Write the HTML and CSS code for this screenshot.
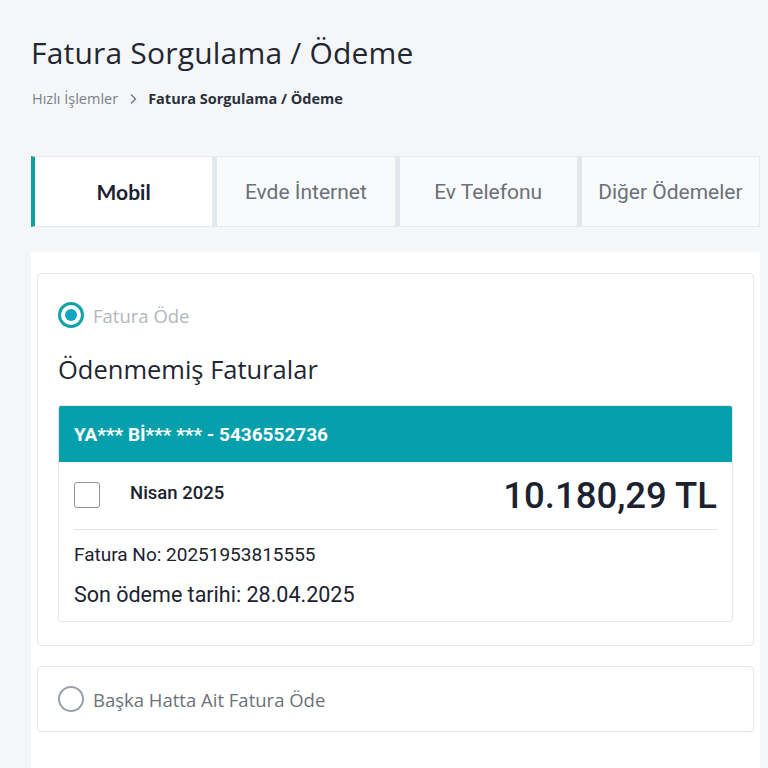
FILE: index.html
```html
<!DOCTYPE html>
<html lang="tr">
<head>
  <meta charset="UTF-8" />
  <meta name="viewport" content="width=device-width, initial-scale=1.0"/>
  <title>Fatura Sorgulama / Ödeme</title>
  <link rel="stylesheet" href="styles.css">
</head>
<body>
  <div class="page">
    <h1 class="title">Fatura Sorgulama / Ödeme</h1>
    <div class="crumbs">
      <span class="crumb-link">Hızlı İşlemler</span>
      <svg class="crumb-sep" width="10" height="12" viewBox="0 0 10 12"><path d="M3 1.5 L7.5 6 L3 10.5" fill="none" stroke="#6b7280" stroke-width="1.3"/></svg>
      <span class="crumb-current">Fatura Sorgulama / Ödeme</span>
    </div>

    <div class="tabs">
      <div class="tab active">Mobil</div>
      <div class="tab">Evde İnternet</div>
      <div class="tab">Ev Telefonu</div>
      <div class="tab">Diğer Ödemeler</div>
    </div>

    <div class="panel">
      <div class="box">
        <label class="option">
          <span class="radio checked"></span>
          <span class="option-label">Fatura Öde</span>
        </label>
        <h2 class="section-title">Ödenmemiş Faturalar</h2>
        <div class="bill">
          <div class="bill-head">YA*** Bİ*** *** - 5436552736</div>
          <div class="bill-body">
            <div class="bill-row">
              <span class="check"></span>
              <span class="bill-month">Nisan 2025</span>
              <span class="bill-amount">10.180,29 TL</span>
            </div>
            <div class="bill-no">Fatura No: 20251953815555</div>
            <div class="bill-due">Son ödeme tarihi: 28.04.2025</div>
          </div>
        </div>
      </div>
      <div class="box box-small">
        <label class="option">
          <span class="radio"></span>
          <span class="option-label other">Başka Hatta Ait Fatura Öde</span>
        </label>
      </div>
    </div>
  </div>
</body>
</html>
```

FILE: styles.css
```css
* { margin: 0; padding: 0; box-sizing: border-box; }
body {
  background: #f5f6f8;
  font-family: 'Open Sans', 'Lato', sans-serif;
  color: #1f2733;
  overflow: hidden;
}
.page {
  padding: 34px 8px 0 31px;
}
.title {
  font-weight: 400;
  font-size: 30px;
  line-height: 38px;
  letter-spacing: 0.2px;
  color: #1f2733;
}
.crumbs {
  display: flex;
  align-items: center;
  gap: 8px;
  margin-top: 18px;
  margin-left: 1px;
  font-size: 14.5px;
  line-height: 18px;
}
.crumb-link { color: #7b8088; }
.crumb-current { font-weight: 700; color: #2a303a; }
.crumb-sep { margin: 0 2px; }

.tabs {
  display: flex;
  margin-top: 48px;
  height: 71px;
}
.tab {
  flex: 1;
  display: flex;
  align-items: center;
  justify-content: center;
  background: #f9fafb;
  border: 1px solid #e6e9ed;
  border-left: 4px solid #e3e6ea;
  font-family: 'Roboto', sans-serif;
  font-size: 21px;
  color: #6b7079;
}
.tab.active {
  background: #fff;
  border-left-color: #0f9ea4;
  color: #1b2230;
  font-weight: 700;
  font-family: 'Lato', sans-serif;
}

.panel {
  margin-top: 25px;
  background: #fff;
  padding: 21px 6px 40px 6px;
  min-height: 520px;
}
.box {
  border: 1px solid #e4e6ea;
  border-radius: 4px;
  padding: 28px 20px 23px 20px;
}
.box-small {
  margin-top: 20px;
  padding: 19px 20px 19px 20px;
}
.option {
  display: flex;
  align-items: center;
  gap: 9px;
}
.radio {
  width: 26px;
  height: 26px;
  border-radius: 50%;
  border: 2px solid #9aa1ad;
  display: flex;
  align-items: center;
  justify-content: center;
}
.radio.checked {
  border: 3px solid #12a2a8;
}
.radio.checked::after {
  content: "";
  width: 12px;
  height: 12px;
  border-radius: 50%;
  background: #12a6c4;
}
.option-label {
  font-size: 18.5px;
  color: #b3b7bd;
}
.option-label.other {
  color: #6d727a;
}
.section-title {
  font-weight: 400;
  font-size: 25.5px;
  line-height: 32px;
  margin-top: 25px;
  color: #1f2733;
}
.bill {
  margin-top: 20px;
  border: 1px solid #e4e6ea;
  border-radius: 3px;
  overflow: hidden;
}
.bill-head {
  background: #069fac;
  color: #fff;
  font-family: 'Roboto', sans-serif;
  font-weight: 700;
  font-size: 19px;
  height: 56px;
  display: flex;
  align-items: center;
  padding-left: 15px;
}
.bill-body {
  padding: 0 15px 13px 15px;
}
.bill-row {
  display: flex;
  align-items: center;
  height: 68px;
  border-bottom: 1px solid #e2e4e8;
}
.check {
  width: 26px;
  height: 26px;
  border: 1px solid #8d939c;
  border-radius: 3px;
  margin-top: -2px;
}
.bill-month {
  font-family: 'Roboto', sans-serif;
  font-weight: 500;
  font-size: 18.5px;
  margin-left: 30px;
  margin-top: -6px;
  color: #1b2230;
}
.bill-amount {
  margin-left: auto;
  font-family: 'Roboto', sans-serif;
  font-weight: 500;
  font-size: 36.5px;
  color: #1b2230;
}
.bill-no {
  font-family: 'Roboto', sans-serif;
  font-size: 19px;
  margin-top: 13px;
  line-height: 24px;
  color: #1b2230;
}
.bill-due {
  font-family: 'Roboto', sans-serif;
  font-size: 21.5px;
  margin-top: 15px;
  line-height: 26px;
  color: #1b2230;
}
```
